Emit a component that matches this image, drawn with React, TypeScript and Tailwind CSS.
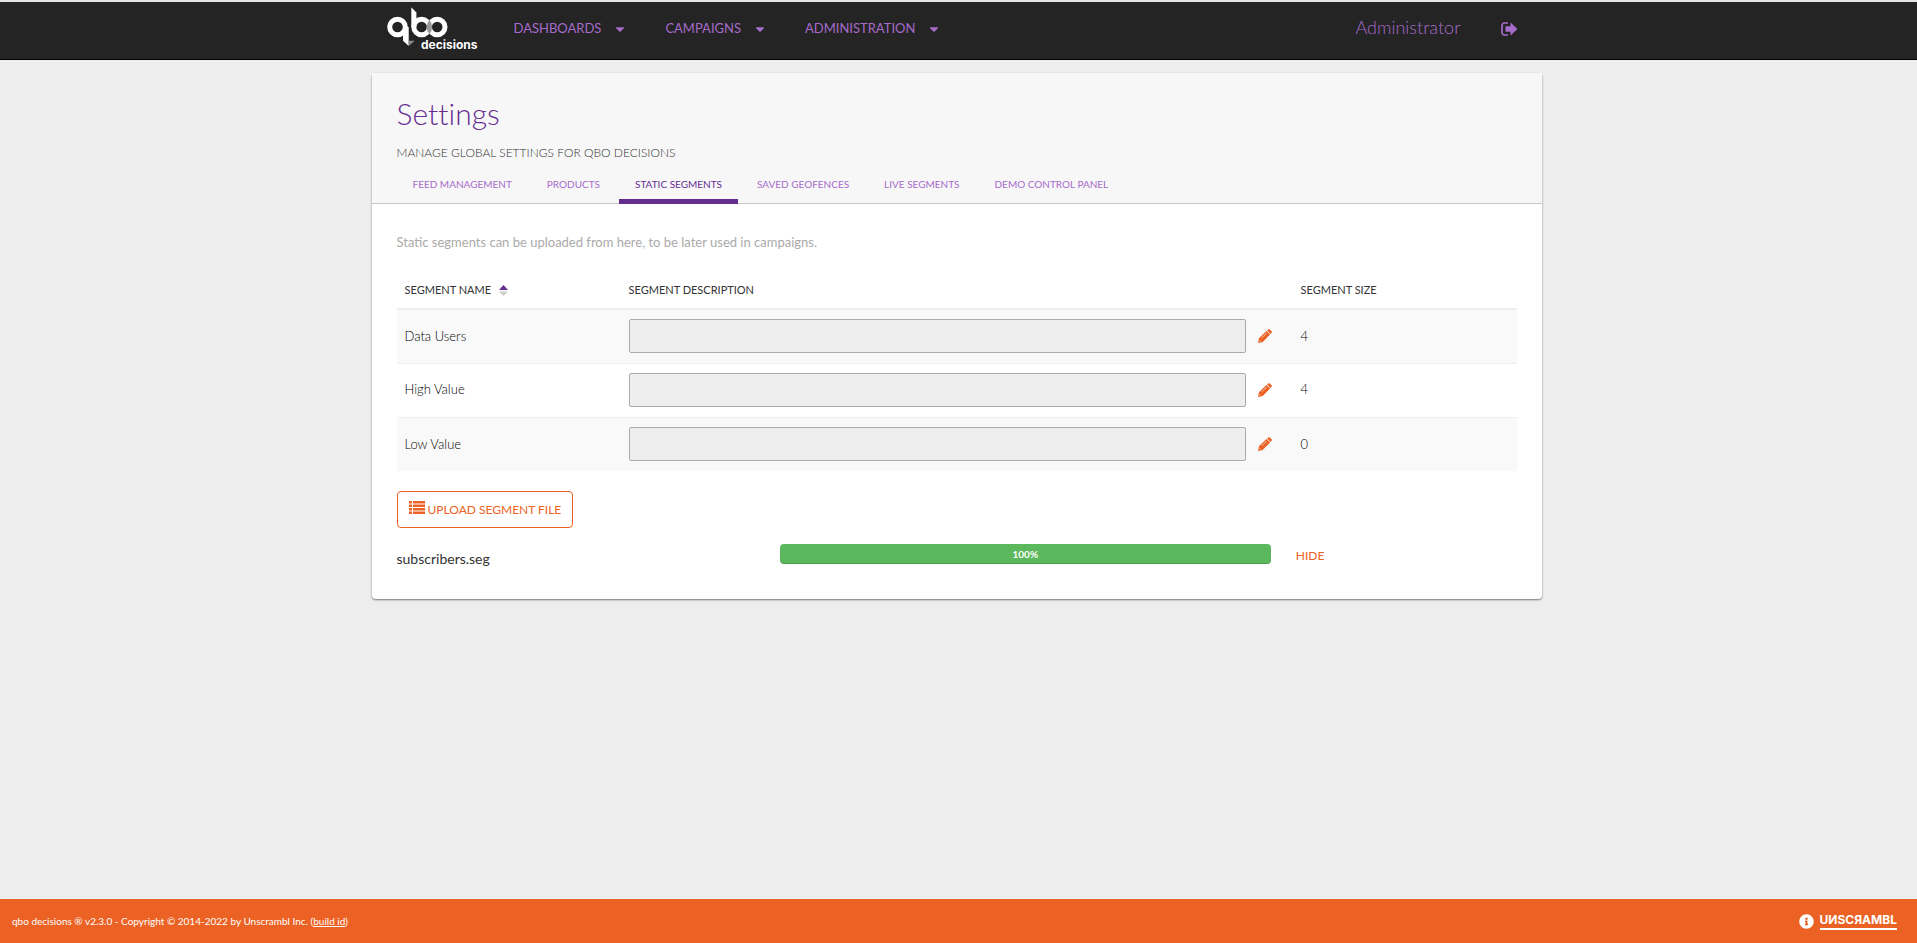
import { useState } from 'react'
import { FaCaretDown, FaInfoCircle } from 'react-icons/fa'

const menus = ['Dashboards', 'Campaigns', 'Administration']

const tabs = ['Feed Management', 'Products', 'Static Segments', 'Saved Geofences', 'Live Segments', 'Demo Control Panel']

const segments = [
  { name: 'Data Users', description: '', size: 4 },
  { name: 'High Value', description: '', size: 4 },
  { name: 'Low Value', description: '', size: 0 }
]

function Logo() {
  return (
    <svg viewBox="0 0 94 48" className="h-12 w-[94px]" role="img" aria-label="qbo decisions">
      <g fill="none" stroke="#fff" strokeWidth="5">
        <circle cx="10.5" cy="22" r="7.8" />
        <circle cx="34.6" cy="22" r="7.8" />
        <circle cx="50.2" cy="22" r="7.8" />
      </g>
      <path d="M16 22h5.7v19L16 35.8z" fill="#fff" />
      <path d="M21.7 35.7h6L21.7 41z" fill="#8a8a8a" />
      <path d="M24.3 2.3 29.4 7.6V22h-5.1z" fill="#fff" />
      <path d="M42.4 14.8q5.6 7.2 0 14.4q-5.6-7.2 0-14.4z" fill="#9a9a9a" />
      <text x="34" y="44" fill="#fff" fontSize="12" fontWeight="700" fontFamily="Inter, sans-serif">decisions</text>
    </svg>
  )
}

function SignOutIcon() {
  return (
    <svg viewBox="0 0 17 14" className="h-[14px] w-[17px]" fill="currentColor" aria-hidden="true">
      <path d="M7 1H3.5A2.5 2.5 0 0 0 1 3.5v7A2.5 2.5 0 0 0 3.5 13H7" fill="none" stroke="currentColor" strokeWidth="1.7" />
      <path d="M4.5 4.2h5V.6L16.5 7l-7 6.4V9.8h-5z" />
    </svg>
  )
}

function PencilIcon() {
  return (
    <svg viewBox="0 0 14 14" className="h-[14px] w-[14px]" fill="currentColor" aria-hidden="true">
      <path d="M10.3.4a1 1 0 0 1 1.4 0l1.9 1.9a1 1 0 0 1 0 1.4l-1.2 1.2L9.1 1.6z" />
      <path fillRule="evenodd" d="M8.4 1.9l3.7 3.7-7.4 7.4L0 14l1-4.700zM8.200 4.100 3.400 8.900l.3.300 4.800-4.800zM1.800 11.200l-.4 1.400 1.400-.4z" />
    </svg>
  )
}

function ListIcon() {
  return (
    <svg viewBox="0 0 16 13" className="h-[13px] w-4" fill="currentColor" aria-hidden="true">
      <path d="M0 0h3v2.5H0zM4 0h12v2.5H4zM0 3.5h3V6H0zM4 3.5h12V6H4zM0 7h3v2.5H0zM4 7h12v2.5H4zM0 10.5h3V13H0zM4 10.5h12V13H4z" />
    </svg>
  )
}

export default function App() {
  const [activeTab, setActiveTab] = useState('Static Segments')
  const [showUpload, setShowUpload] = useState(true)

  return (
    <div className="min-h-screen w-full flex flex-col bg-[#ededed] text-[#333] font-[Lato,sans-serif]">
      <header className="border-t-2 border-b border-t-[#e3e5e7] border-b-black bg-[#242424] pr-1 text-[#a66bcb]">
        <div className="mx-auto flex h-[57px] max-w-[1170px] items-center pb-1 pl-[15px] pr-6">
          <a href="#"><Logo /></a>
          <nav className="ml-[33px] flex gap-10">
            {menus.map((m) => (
              <button key={m} type="button" className="flex items-center gap-3.5 text-[13px] uppercase">
                {m}
                <FaCaretDown className="h-3.5 w-2.5" />
              </button>
            ))}
          </nav>
          <div className="ml-auto flex items-center gap-10">
            <a href="#" className="pb-1 text-lg font-light">Administrator</a>
            <button type="button" aria-label="Sign out"><SignOutIcon /></button>
          </div>
        </div>
      </header>

      <div className="mt-[13px] mb-8 pr-1">
        <main className="mx-auto max-w-[1170px] rounded-sm bg-white shadow-[0_1px_2px_rgba(0,0,0,0.5)]">
          <div className="border-b border-[#c8c8c8] bg-[#f7f7f7] px-[25px] pt-5">
            <h1 className="text-[30px] leading-10 font-light text-[#662d91] [font-variant-ligatures:none]">Settings</h1>
            <p className="mt-[10px] text-xs leading-5 font-light uppercase text-[#333]">Manage global settings for qbo decisions</p>
            <div role="tablist" className="mt-2 -mb-px flex gap-[3px]">
              {tabs.map((t) => (
                <button
                  key={t}
                  type="button"
                  role="tab"
                  aria-selected={activeTab === t}
                  onClick={() => setActiveTab(t)}
                  className={`h-[33px] border-b-[5px] px-4 pb-[2px] text-[10px] leading-4 uppercase ${activeTab === t ? 'border-[#662d91] text-[#662d91]' : 'border-transparent text-[#a66bcb]'}`}
                >
                  {t}
                </button>
              ))}
            </div>
          </div>

          <div className="px-[25px] pt-7 pb-[30px]">
            <p className="text-[13px] leading-5 text-[#aaa]">Static segments can be uploaded from here, to be later used in campaigns.</p>

            <table className="mt-[21px] w-full table-fixed border-collapse text-left">
              <thead>
                <tr className="h-9 border-b-2 border-[#eee] text-[11px] uppercase">
                  <th className="w-1/5 px-2 font-normal">
                    <span className="flex items-center gap-2">
                      Segment Name
                      <svg viewBox="0 0 9 11" className="h-[11px] w-[9px]" aria-hidden="true">
                        <path d="M0 5 4.5 0 9 5z" fill="#662d91" />
                        <path d="M0 6.5h9L4.5 11z" fill="#ccc" />
                      </svg>
                    </span>
                  </th>
                  <th className="w-3/5 px-2 font-normal">Segment Description</th>
                  <th className="w-1/5 px-2 font-normal">Segment Size</th>
                </tr>
              </thead>
              <tbody>
                {segments.map((s) => (
                  <tr key={s.name} className="h-[54px] border-b border-[#eee] odd:bg-[#f9f9f9] last:border-b-0 text-[13px] font-light text-black">
                    <td className="px-2">{s.name}</td>
                    <td className="px-2">
                      <div className="flex items-center gap-3">
                        <input
                          type="text"
                          readOnly
                          value={s.description}
                          aria-label={`${s.name} description`}
                          className="h-[34px] min-w-0 flex-1 rounded-xs border border-[#aaa] bg-[#eee] px-3"
                        />
                        <button type="button" aria-label={`Edit ${s.name}`} className="mr-[13px] text-[#eb6224]"><PencilIcon /></button>
                      </div>
                    </td>
                    <td className="px-2">{s.size}</td>
                  </tr>
                ))}
              </tbody>
            </table>

            <button type="button" className="mt-5 flex h-[37px] items-center gap-[3px] rounded-sm border border-[#eb6224] px-[11px] text-xs uppercase text-[#eb6224]">
              <span className="pb-1"><ListIcon /></span>
              <span>Upload Segment File</span>
            </button>

            {showUpload && (
              <div className="-mx-[15px] mt-4 flex items-start">
                <div className="w-1/3 px-[15px] pt-[5px] text-sm">subscribers.seg</div>
                <div className="w-[521px] px-[15px]">
                  <div
                    role="progressbar"
                    aria-label="subscribers.seg upload"
                    aria-valuenow={100}
                    className="h-5 rounded-sm bg-[#5cb85c] text-center text-[10px] leading-5 font-bold text-white shadow-[inset_0_-1px_0_rgba(0,0,0,0.15)]"
                  >
                    100%
                  </div>
                </div>
                <button type="button" onClick={() => setShowUpload(false)} className="px-[10px] pt-[2px] text-xs leading-5 uppercase text-[#eb6224]">
                  Hide
                </button>
              </div>
            )}
          </div>
        </main>
      </div>

      <footer className="mt-auto flex h-11 items-center justify-between bg-[#eb6224] pl-3 pr-5 text-[10px] text-white">
        <p>
          qbo decisions ® v2.3.0 - Copyright © 2014-2022 by Unscrambl Inc. (<a href="#" className="underline">build id</a>)
        </p>
        <div className="flex items-center gap-[6px]">
          <FaInfoCircle className="h-[15px] w-[15px]" />
          <a href="#" className="border-b-2 border-white text-xs leading-4 font-bold font-[Inter,sans-serif]">UИSCЯAMBL</a>
        </div>
      </footer>
    </div>
  )
}
